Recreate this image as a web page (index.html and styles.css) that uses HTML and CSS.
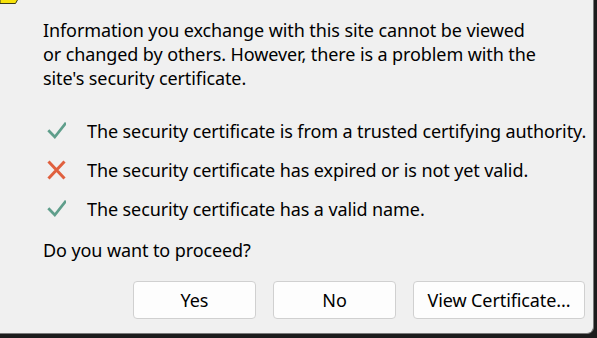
FILE: index.html
```html
<!DOCTYPE html>
<html>
<head>
<meta charset="utf-8">
<link rel="stylesheet" href="styles.css">
</head>
<body>
<div class="dialog">
  <svg class="warn" width="20" height="5" viewBox="0 0 20 5"><path d="M0 -1 L18 -1 L15.5 3.5 L0 3.5 Z" fill="#f7e20a" stroke="#3a3a1a" stroke-width="1"/></svg>
  <p class="intro">Information you exchange with this site cannot be viewed<br>or changed by others. However, there is a problem with the<br>site's security certificate.</p>
  <ul class="checks">
    <li><svg class="ico" width="20" height="20" viewBox="0 0 20 20"><path d="M2.3 9.3 L8.8 16 L20 1.8" fill="none" stroke="#5f9e8b" stroke-width="2.8"/></svg><span>The security certificate is from a trusted certifying authority.</span></li>
    <li><svg class="ico" width="20" height="20" viewBox="0 0 20 20"><path d="M2.5 1.5 L18.5 18.5 M18.5 1.5 L2.5 18.5" fill="none" stroke="#e0603e" stroke-width="3"/></svg><span>The security certificate has expired or is not yet valid.</span></li>
    <li><svg class="ico" width="20" height="20" viewBox="0 0 20 20"><path d="M2.3 9.3 L8.8 16 L20 1.8" fill="none" stroke="#5f9e8b" stroke-width="2.8"/></svg><span>The security certificate has a valid name.</span></li>
  </ul>
  <p class="question">Do you want to proceed?</p>
  <div class="buttons">
    <button class="btn">Yes</button>
    <button class="btn">No</button>
    <button class="btn wide">View Certificate...</button>
  </div>
</div>
</body>
</html>
```
FILE: styles.css
```css
html, body {
  margin: 0;
  padding: 0;
  background: #1c1c1c;
  width: 597px;
  height: 338px;
  overflow: hidden;
}
.dialog {
  position: relative;
  box-sizing: border-box;
  width: 594px;
  height: 334px;
  background: #f0f0f0;
  border-right: 1px solid #7a7a7a;
  border-bottom: 1px solid #7a7a7a;
  border-bottom-right-radius: 7px;
  font-family: "Noto Sans", sans-serif;
  font-size: 18px;
  letter-spacing: -0.1px;
  color: #000;
  padding: 18px 0 0 43px;
}
.warn {
  position: absolute;
  left: 0;
  top: 0;
}
.intro {
  margin: 0;
  width: 540px;
  line-height: 24px;
  white-space: nowrap;
}
.checks {
  list-style: none;
  margin: 21px 0 0 0;
  padding: 0;
}
.checks li {
  display: flex;
  align-items: center;
  height: 39px;
  white-space: nowrap;
}
.ico {
  margin-left: 3px;
  margin-right: 21px;
}
.question {
  margin: 2px 0 0 0;
  line-height: 40px;
}
.buttons {
  display: flex;
  gap: 17px;
  margin: 0 0 0 90px;
  padding-top: 11px;
}
.btn {
  box-sizing: border-box;
  width: 123px;
  height: 38px;
  background: #fdfdfd;
  border: 1px solid #d0d0d0;
  border-radius: 4px;
  font-family: inherit;
  font-size: 18px;
  letter-spacing: -0.1px;
  color: #000;
  padding: 0;
}
.btn.wide {
  width: 172px;
}
```
